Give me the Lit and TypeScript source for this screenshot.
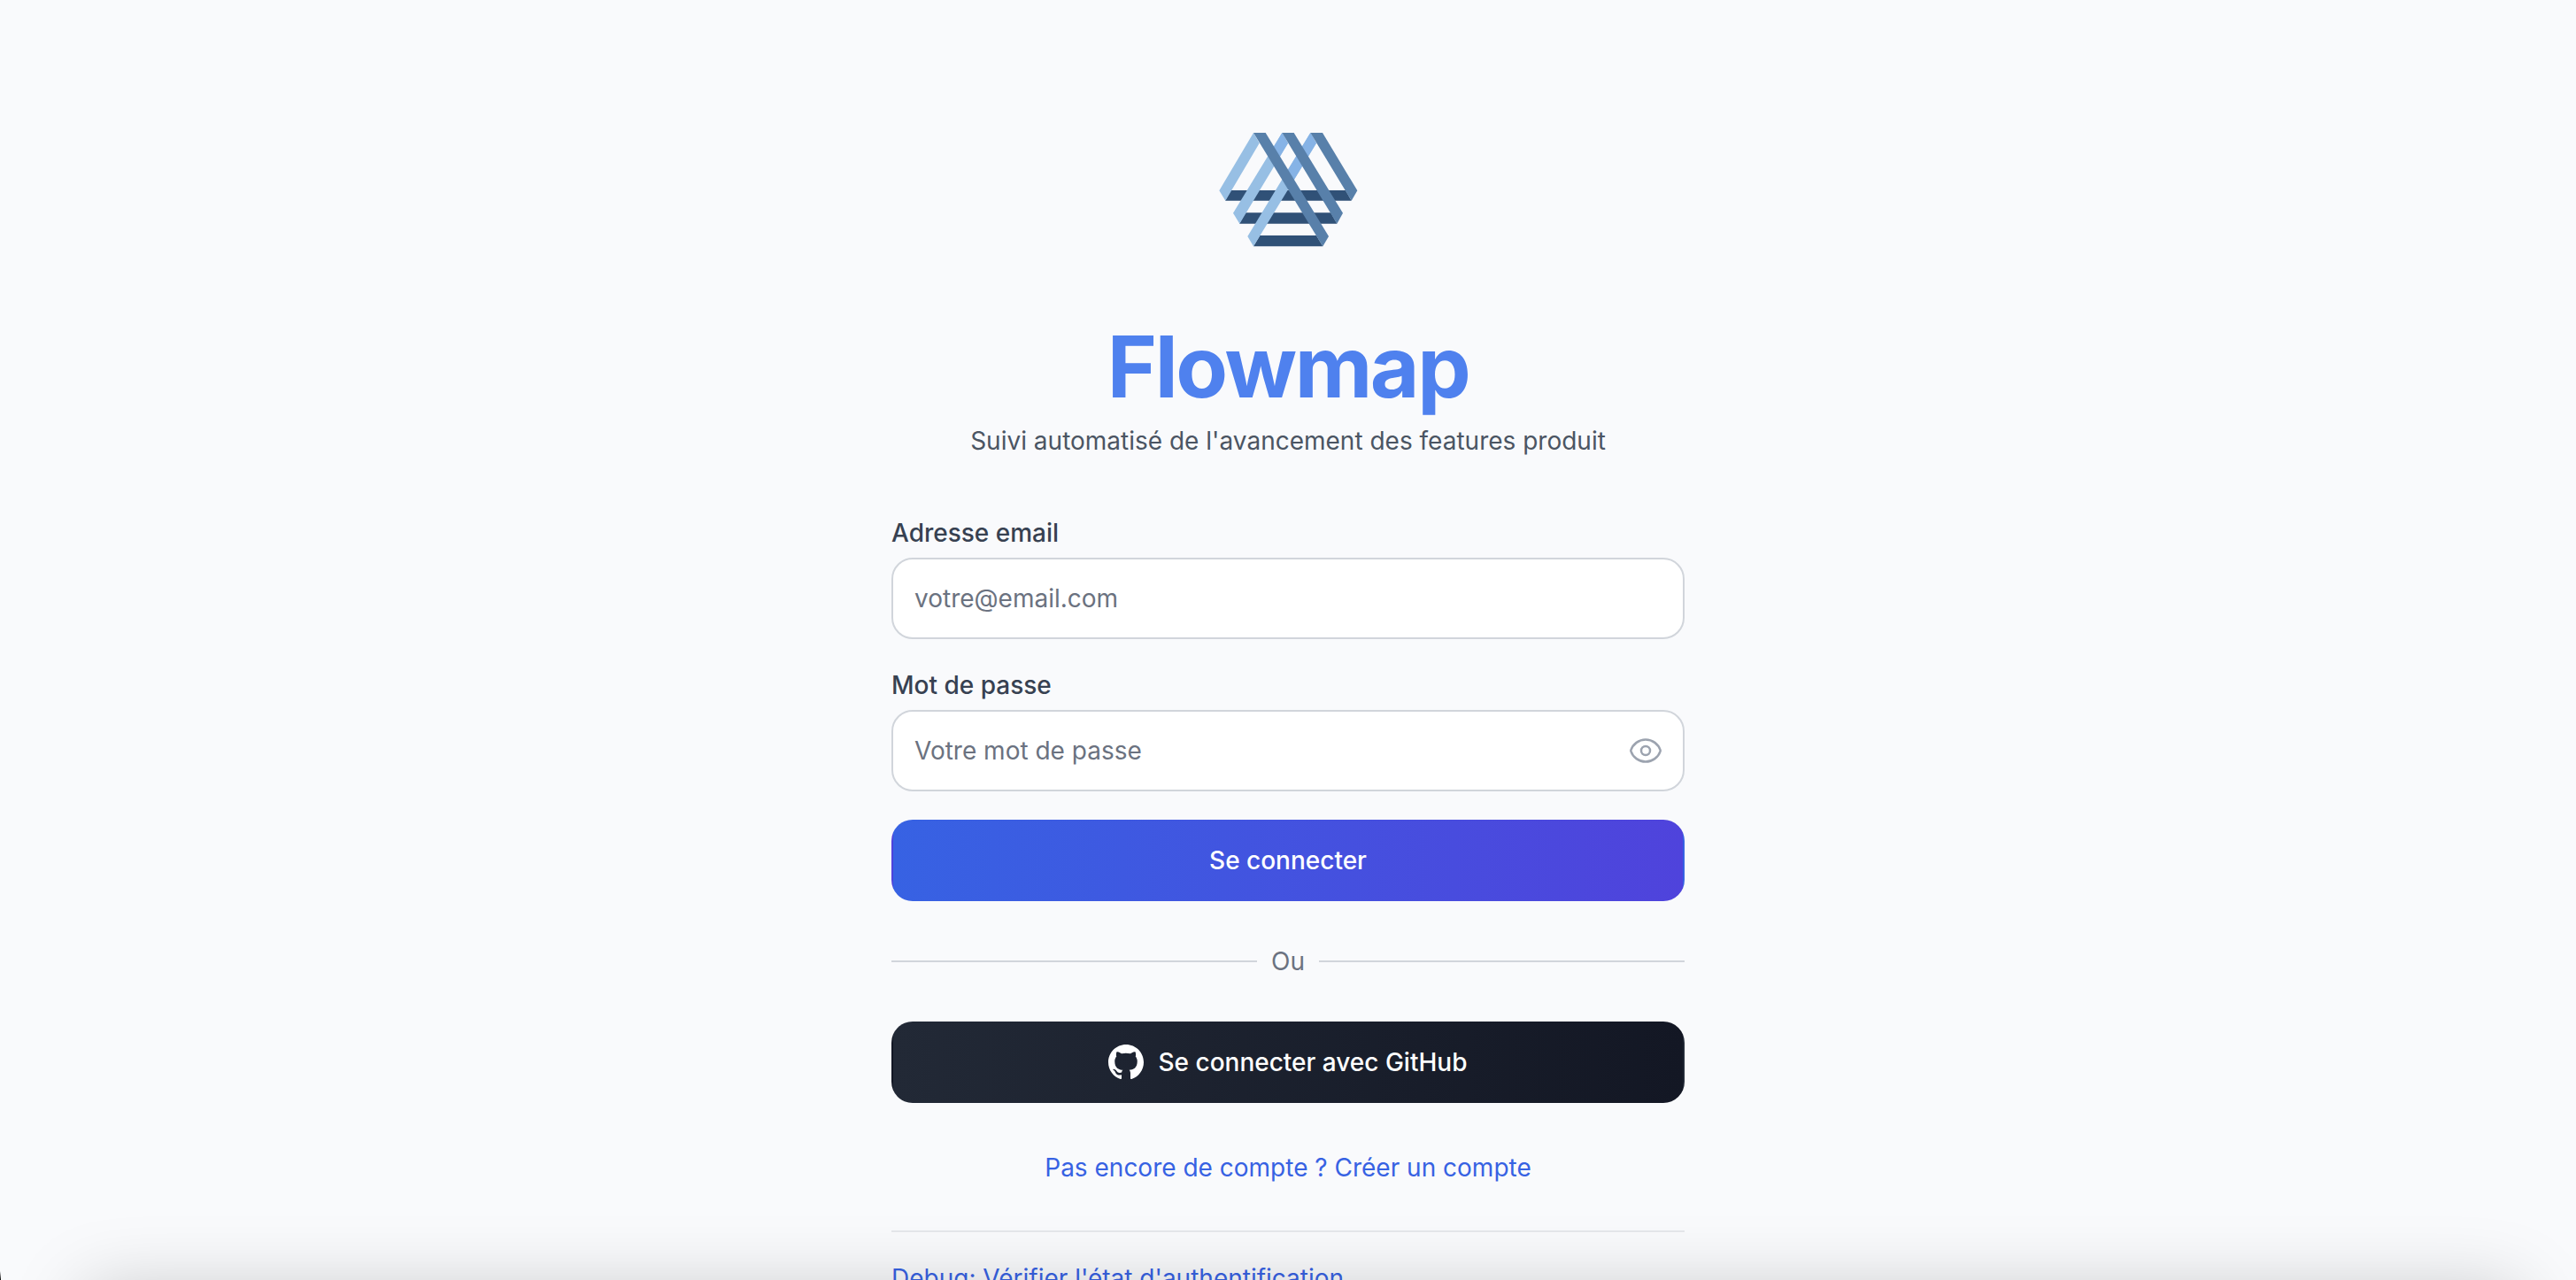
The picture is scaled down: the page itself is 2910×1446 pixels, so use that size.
import { LitElement, html, svg, css } from "lit";
import { customElement, state } from "lit/decorators.js";

const logo = svg`
  <svg class="logo" viewBox="45 12 480 480" aria-hidden="true">
    <g fill="#305177">
      <path d="M92 255H480L500 290H72Z" />
      <path d="M141 331H430L451 368H120Z" />
      <path d="M190 408H381L403 445H168Z" />
    </g>
    <g fill="#97bfe4">
      <path d="M168 60L188 95L73 290L52 256Z" />
      <path d="M265 60L285 95L121 368L99 332Z" />
      <path d="M361 60L381 95L168 445L148 411Z" />
    </g>
    <g fill="#86b3e6">
      <path d="M265 60L285 95L241 168L220 134Z" />
      <path d="M361 60L381 95L291 243L270 209Z" />
    </g>
    <g fill="#5880aa">
      <path d="M361 60H402L520 256L500 290Z" />
      <path d="M265 60H305L471 332L451 368Z" />
      <path d="M168 60H209L423 411L403 445Z" />
    </g>
  </svg>
`;

const eyeIcon = svg`
  <svg class="icon" viewBox="0 0 24 24" fill="none" stroke="currentColor" stroke-width="1.5"
    stroke-linecap="round" stroke-linejoin="round" aria-hidden="true">
    <path d="M2.036 12.322a1.012 1.012 0 0 1 0-.639C3.423 7.51 7.36 4.5 12 4.5c4.638 0 8.573 3.007 9.963 7.178.07.207.07.431 0 .639C20.577 16.49 16.64 19.5 12 19.5c-4.638 0-8.573-3.007-9.963-7.178Z" />
    <path d="M15 12a3 3 0 1 1-6 0 3 3 0 0 1 6 0Z" />
  </svg>
`;

const githubIcon = svg`
  <svg class="icon" viewBox="0 0 24 24" fill="currentColor" aria-hidden="true">
    <path d="M12 0c-6.626 0-12 5.373-12 12 0 5.302 3.438 9.8 8.207 11.387.599.111.793-.261.793-.577v-2.234c-3.338.726-4.033-1.416-4.033-1.416-.546-1.387-1.333-1.756-1.333-1.756-1.089-.745.083-.729.083-.729 1.205.084 1.839 1.237 1.839 1.237 1.07 1.834 2.807 1.304 3.492.997.107-.775.418-1.305.762-1.604-2.665-.305-5.467-1.334-5.467-5.931 0-1.311.469-2.381 1.236-3.221-.124-.303-.535-1.524.117-3.176 0 0 1.008-.322 3.301 1.23.957-.266 1.983-.399 3.003-.404 1.02.005 2.047.138 3.006.404 2.291-1.552 3.297-1.23 3.297-1.23.653 1.653.242 2.874.118 3.176.77.84 1.235 1.911 1.235 3.221 0 4.609-2.807 5.624-5.479 5.921.43.372.823 1.102.823 2.222v3.293c0 .319.192.694.801.576 4.765-1.589 8.199-6.086 8.199-11.386 0-6.627-5.373-12-12-12z" />
  </svg>
`;

@customElement("app-root")
export class AppRoot extends LitElement {
  @state() private passwordVisible = false;

  static styles = css`
    :host {
      display: block;
      height: 100vh;
      overflow-y: auto;
      scrollbar-width: none;
      background: #f9fafc;
      color: #4b5563;
      font-family: Inter, "Liberation Sans", sans-serif;
      font-size: 28px;
      line-height: 40px;
    }
    * {
      box-sizing: border-box;
    }
    .page {
      display: flex;
      flex-direction: column;
      align-items: center;
      padding: 134px 32px 96px;
    }
    .panel {
      display: flex;
      flex-direction: column;
      width: 100%;
      max-width: 896px;
    }
    .header {
      display: flex;
      flex-direction: column;
      align-items: center;
      margin-bottom: 64px;
      text-align: center;
    }
    .logo {
      width: 160px;
      height: 160px;
      margin-bottom: 72px;
    }
    .title {
      margin: 0 0 16px;
      color: #4f81ee;
      font-size: 96px;
      font-weight: 700;
      line-height: 96px;
      letter-spacing: -0.025em;
    }
    .subtitle {
      margin: 0;
    }
    .form {
      display: flex;
      flex-direction: column;
      gap: 32px;
    }
    .field {
      display: flex;
      flex-direction: column;
      gap: 8px;
    }
    .label {
      color: #374151;
      font-weight: 500;
    }
    .box {
      display: flex;
      align-items: center;
      gap: 16px;
      padding: 0 24px;
      border: 2px solid #d1d5db;
      border-radius: 24px;
      background: #fff;
    }
    .box:focus-within {
      border-color: #3762e3;
    }
    .input {
      flex: 1;
      min-width: 0;
      height: 88px;
      padding: 0;
      border: 0;
      outline: 0;
      background: transparent;
      color: #111827;
      font: inherit;
    }
    .input::placeholder {
      color: #6b7280;
      opacity: 1;
    }
    .toggle {
      display: flex;
      margin-right: -2px;
      padding: 0;
      border: 0;
      background: none;
      color: #9ca3af;
      cursor: pointer;
    }
    .icon {
      display: block;
      width: 40px;
      height: 40px;
    }
    .button {
      display: flex;
      align-items: center;
      justify-content: center;
      gap: 16px;
      width: 100%;
      padding: 24px 32px;
      border: 2px solid transparent;
      border-radius: 24px;
      color: #fff;
      font: inherit;
      font-weight: 500;
      cursor: pointer;
    }
    .primary {
      background-image: linear-gradient(to right, #3762e3, #4f43dc);
    }
    .github {
      background-image: linear-gradient(to right, #222936, #131724);
    }
    .divider {
      display: flex;
      align-items: center;
      gap: 16px;
      margin: 48px 0;
      color: #6b7280;
    }
    .divider::before,
    .divider::after {
      content: "";
      flex: 1;
      height: 2px;
      background: #d1d5db;
    }
    .link {
      color: #3762e3;
      font-size: 28px;
      line-height: 40px;
      text-decoration: none;
    }
    .signup {
      margin: 48px 0;
      font-size: 32px;
      line-height: 48px;
      text-align: center;
    }
    .debug {
      padding-top: 32px;
      border-top: 2px solid #e5e7eb;
    }
    .shade {
      position: fixed;
      right: 64px;
      bottom: -200px;
      left: 96px;
      height: 188px;
      box-shadow: 0 0 84px rgba(0, 0, 0, 0.21);
      pointer-events: none;
    }
    .corner {
      position: fixed;
      bottom: 0;
      left: 0;
      width: 1px;
      height: 10px;
      background: linear-gradient(transparent, #000);
      pointer-events: none;
    }
  `;

  render() {
    return html`
      <main class="page">
        <div class="panel">
          <header class="header">
            ${logo}
            <h1 class="title">Flowmap</h1>
            <p class="subtitle">Suivi automatisé de l'avancement des features produit</p>
          </header>

          <form class="form" @submit=${(e: Event) => e.preventDefault()}>
            <div class="field">
              <label class="label" for="email">Adresse email</label>
              <div class="box">
                <input class="input" id="email" type="email" placeholder="votre@email.com" />
              </div>
            </div>
            <div class="field">
              <label class="label" for="password">Mot de passe</label>
              <div class="box">
                <input
                  class="input"
                  id="password"
                  type=${this.passwordVisible ? "text" : "password"}
                  placeholder="Votre mot de passe"
                />
                <button
                  class="toggle"
                  type="button"
                  aria-label="Afficher le mot de passe"
                  aria-pressed=${this.passwordVisible ? "true" : "false"}
                  @click=${() => (this.passwordVisible = !this.passwordVisible)}
                >
                  ${eyeIcon}
                </button>
              </div>
            </div>
            <button class="button primary" type="submit">Se connecter</button>
          </form>

          <div class="divider">Ou</div>

          <button class="button github" type="button">${githubIcon}Se connecter avec GitHub</button>

          <div class="signup">
            <a class="link" href="#signup">Pas encore de compte ? Créer un compte</a>
          </div>

          <div class="debug">
            <a class="link" href="#debug">Debug: Vérifier l'état d'authentification</a>
          </div>
        </div>
      </main>
      <div class="shade"></div>
      <div class="corner"></div>
    `;
  }
}
